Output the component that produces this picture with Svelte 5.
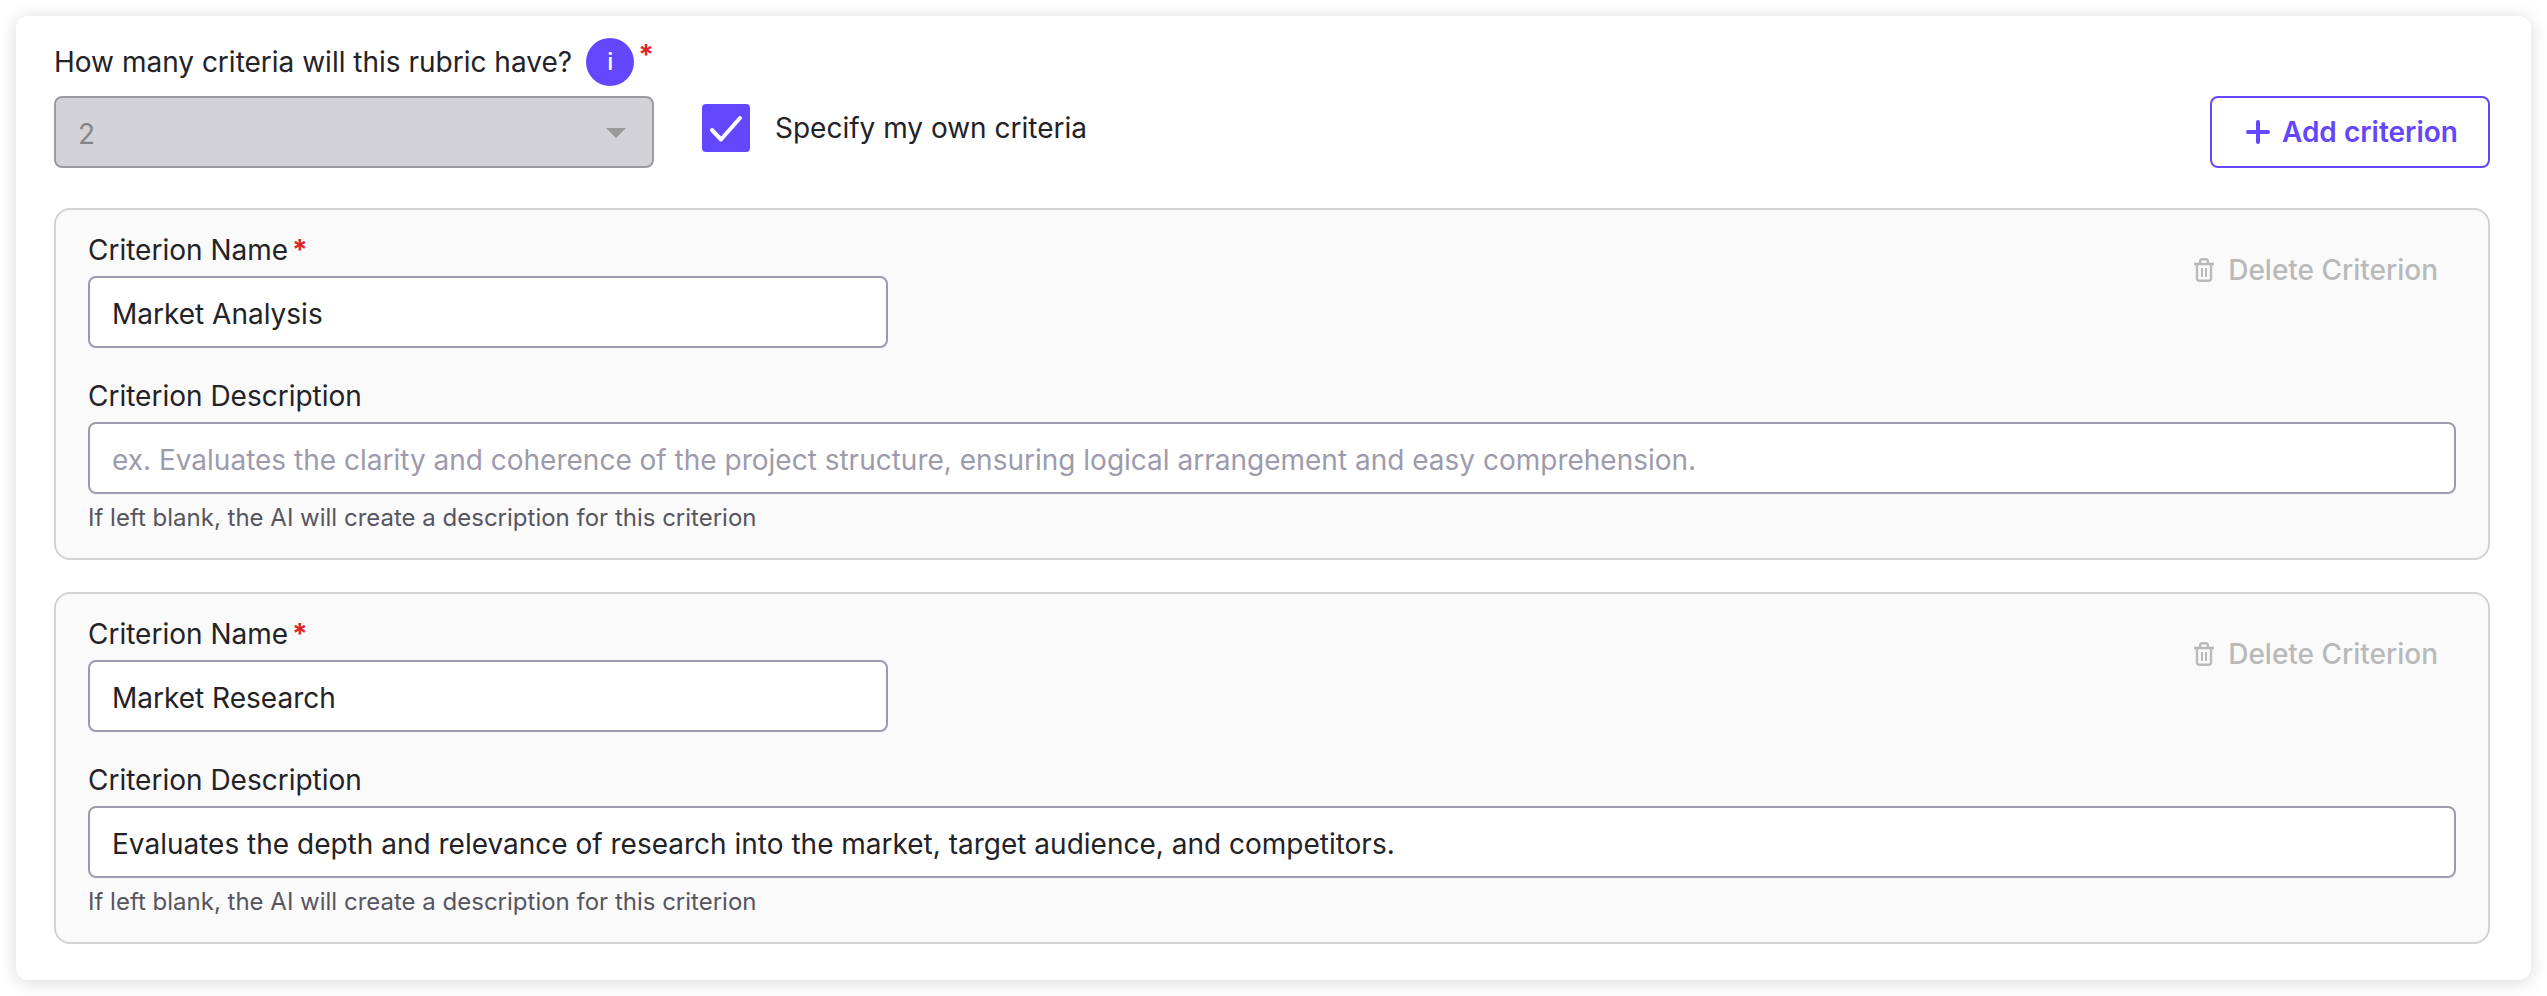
<script lang="ts">
  let ownCriteria = true;
  let criteria = [
    { name: 'Market Analysis', description: '' },
    {
      name: 'Market Research',
      description:
        'Evaluates the depth and relevance of research into the market, target audience, and competitors.'
    }
  ];

  const minCriteria = 2;
  const placeholder =
    'ex. Evaluates the clarity and coherence of the project structure, ensuring logical arrangement and easy comprehension.';

  const addCriterion = () => {
    criteria = [...criteria, { name: '', description: '' }];
  };

  const deleteCriterion = (index: number) => {
    criteria = criteria.filter((_, i) => i !== index);
  };
</script>

<section class="card">
  <div class="header">
    <div class="count">
      <div class="question">
        <label for="criteria-count">How many criteria will this rubric have?</label>
        <button class="info" type="button">i</button>
        <span class="required">*</span>
      </div>
      <div class="select">
        <select id="criteria-count" disabled>
          <option>{criteria.length}</option>
        </select>
        <svg class="arrow" viewBox="0 0 20 10" aria-hidden="true"><path d="M0 0h20L10 10z" /></svg>
      </div>
    </div>

    <label class="own">
      <span class="check">
        <input type="checkbox" bind:checked={ownCriteria} />
        {#if ownCriteria}
          <svg viewBox="0 0 48 48" aria-hidden="true"><path d="M10 26l9 9.500L38 14" /></svg>
        {/if}
      </span>
      Specify my own criteria
    </label>

    <button class="add" type="button" on:click={addCriterion}>
      <svg viewBox="0 0 24 24" aria-hidden="true"><path d="M12 2v20M2 12h20" /></svg>
      Add criterion
    </button>
  </div>

  <div class="list">
    {#each criteria as criterion, i}
      <div class="criterion">
        <div class="top">
          <div class="field name">
            <label for="name-{i}">Criterion Name<span class="required">*</span></label>
            <input id="name-{i}" type="text" bind:value={criterion.name} />
          </div>
          <button
            class="delete"
            type="button"
            disabled={criteria.length <= minCriteria}
            on:click={() => deleteCriterion(i)}
          >
            <svg viewBox="0 0 20 24" aria-hidden="true">
              <path d="M0 6h20M6 6V4a2.500 2.500 0 0 1 2.500-2.800h3A2.500 2.500 0 0 1 14 4v2M3 6v14.500a2.500 2.500 0 0 0 2.500 2.300h9a2.500 2.500 0 0 0 2.500-2.300V6" />
              <path class="slats" d="M8 10v9M12 10v9" />
            </svg>
            Delete Criterion
          </button>
        </div>
        <div class="field">
          <label for="description-{i}">Criterion Description</label>
          <input id="description-{i}" type="text" {placeholder} bind:value={criterion.description} />
          <p class="hint">If left blank, the AI will create a description for this criterion</p>
        </div>
      </div>
    {/each}
  </div>
</section>

<style>
:global(body) {
  background: #fff;
}
.card {
  margin: 16px;
  padding: 22px 41px 36px 38px;
  border-radius: 12px;
  background: #fff;
  box-shadow: 0 2px 18px rgba(0, 0, 0, 0.16);
  color: #222227;
  font-family: Inter, sans-serif;
  font-size: 28px;
  line-height: 40px;
}
input,
select,
button {
  box-sizing: border-box;
  margin: 0;
  font: inherit;
  color: inherit;
}
svg {
  display: block;
  fill: none;
  stroke: currentColor;
}
.header {
  display: flex;
  align-items: flex-end;
  margin-bottom: 40px;
}
.count {
  width: 600px;
}
.question {
  display: flex;
  align-items: center;
  margin-bottom: 10px;
}
.info {
  width: 48px;
  height: 48px;
  margin-left: auto;
  padding: 0;
  border: none;
  border-radius: 50%;
  background: #6347ff;
  color: #fff;
  font-size: 24px;
  font-weight: 500;
}
.required {
  margin-left: 4px;
  color: #dc2626;
  font-weight: 700;
}
.question .required {
  align-self: flex-start;
  line-height: 34px;
}
.select {
  position: relative;
}
select {
  display: block;
  width: 100%;
  height: 72px;
  padding: 4px 22px 0;
  border: 2px solid #9b9ba0;
  border-radius: 8px;
  background: #d3d2d7;
  color: #858589;
  appearance: none;
  opacity: 1;
}
.arrow {
  position: absolute;
  right: 28px;
  top: 32px;
  width: 20px;
  height: 10px;
  fill: #999;
  stroke: none;
}
.own {
  display: flex;
  align-items: center;
  gap: 25px;
  margin: 0 auto 16px 48px;
}
.check {
  position: relative;
}
.check input {
  display: block;
  width: 48px;
  height: 48px;
  border: 2px solid #9d9bab;
  border-radius: 4px;
  background: #fff;
  appearance: none;
}
.check input:checked {
  border-color: #6347ff;
  background: #6347ff;
}
.check svg {
  position: absolute;
  inset: 0;
  color: #fff;
  stroke-width: 4;
  stroke-linecap: round;
  stroke-linejoin: round;
  pointer-events: none;
}
.add {
  display: flex;
  align-items: center;
  gap: 12px;
  height: 72px;
  padding: 0 30px 0 34px;
  border: 2px solid #6347ff;
  border-radius: 8px;
  background: #fff;
  color: #6347ff;
  font-weight: 600;
}
.add svg {
  width: 24px;
  height: 24px;
  stroke-width: 4;
  stroke-linecap: round;
}
.list {
  display: flex;
  flex-direction: column;
  gap: 32px;
}
.criterion {
  padding: 20px 32px 22px;
  border: 2px solid #d3d3d8;
  border-radius: 16px;
  background: #fafafa;
}
.top {
  display: flex;
  justify-content: space-between;
  align-items: flex-start;
  margin-bottom: 28px;
}
.field {
  display: flex;
  flex-direction: column;
  gap: 6px;
}
.name {
  width: 800px;
}
.field input {
  width: 100%;
  height: 72px;
  padding: 4px 22px 0;
  border: 2px solid #9d9bab;
  border-radius: 8px;
  background: #fff;
}
.field input::placeholder {
  color: #9d9bab;
  opacity: 1;
}
.hint {
  margin: 0;
  color: #565560;
  font-size: 24px;
  line-height: 36px;
}
.delete {
  display: flex;
  align-items: center;
  gap: 14px;
  margin-top: 8px;
  padding: 12px 18px;
  border: none;
  background: none;
  color: #b9b9b9;
  font-weight: 500;
}
.delete svg {
  width: 20px;
  height: 24px;
  stroke-width: 2.4;
}
.delete .slats {
  stroke-width: 2;
}
</style>
